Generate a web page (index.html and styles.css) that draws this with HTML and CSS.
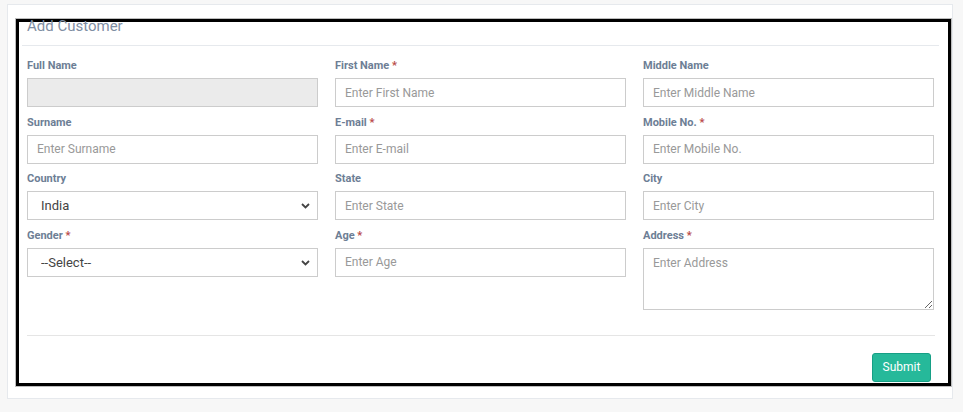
FILE: index.html
```html
<!DOCTYPE html>
<html lang="en">
<head>
    <meta charset="UTF-8">
    <meta name="viewport" content="width=device-width, initial-scale=1.0">
    <title>Add Customer</title>
    <link rel="stylesheet" href="styles.css">
</head>
<body>

    <div class="panel">
        <div class="box">
            <div class="x-title">Add Customer</div>

            <form class="form-grid">
                <div class="field">
                    <label>Full Name</label>
                    <input type="text" class="form-control" disabled>
                </div>
                <div class="field">
                    <label>First Name <span class="req">*</span></label>
                    <input type="text" class="form-control" placeholder="Enter First Name">
                </div>
                <div class="field">
                    <label>Middle Name</label>
                    <input type="text" class="form-control" placeholder="Enter Middle Name">
                </div>

                <div class="field">
                    <label>Surname</label>
                    <input type="text" class="form-control" placeholder="Enter Surname">
                </div>
                <div class="field">
                    <label>E-mail <span class="req">*</span></label>
                    <input type="text" class="form-control" placeholder="Enter E-mail">
                </div>
                <div class="field">
                    <label>Mobile No. <span class="req">*</span></label>
                    <input type="text" class="form-control" placeholder="Enter Mobile No.">
                </div>

                <div class="field">
                    <label>Country</label>
                    <div class="select-wrap">
                        <select class="form-control">
                            <option>India</option>
                        </select>
                        <svg class="chevron" width="9" height="6" viewBox="0 0 9 6"><path d="M1 1l3.5 3.5L8 1" fill="none" stroke="#444" stroke-width="1.8"/></svg>
                    </div>
                </div>
                <div class="field">
                    <label>State</label>
                    <input type="text" class="form-control" placeholder="Enter State">
                </div>
                <div class="field">
                    <label>City</label>
                    <input type="text" class="form-control" placeholder="Enter City">
                </div>

                <div class="field">
                    <label>Gender <span class="req">*</span></label>
                    <div class="select-wrap">
                        <select class="form-control">
                            <option>--Select--</option>
                        </select>
                        <svg class="chevron" width="9" height="6" viewBox="0 0 9 6"><path d="M1 1l3.5 3.5L8 1" fill="none" stroke="#444" stroke-width="1.8"/></svg>
                    </div>
                </div>
                <div class="field">
                    <label>Age <span class="req">*</span></label>
                    <input type="text" class="form-control" placeholder="Enter Age">
                </div>
                <div class="field">
                    <label>Address <span class="req">*</span></label>
                    <textarea class="form-control address" placeholder="Enter Address"></textarea>
                </div>
            </form>

            <div class="form-footer">
                <button type="button" class="btn-success">Submit</button>
            </div>
        </div>
    </div>

</body>
</html>
```

FILE: styles.css
```css
body{
    margin: 0;
    background-color: #f7f7f7;
    font-family: Roboto, "Liberation Sans", Arial, sans-serif;
    color: #73879c;
}

.panel{
    margin: 4px 10px 13px 7px;
    background-color: #fff;
    border: 1px solid #e6e9ed;
    padding: 14px 1px 12px 8px;
}

.box{
    border: 3px solid #000;
    box-shadow: 0 0 0 1px #bdbdbd;
    padding-bottom: 1px;
}

.x-title{
    margin: -5px 9px 0 3px;
    padding: 0 0 10px 5px;
    font-size: 15px;
    line-height: 18px;
    color: #7f8ea3;
    border-bottom: 1px solid #e6e9ed;
}

.form-grid{
    display: grid;
    grid-template-columns: repeat(3, 291px);
    column-gap: 17px;
    row-gap: 8.6px;
    padding: 13px 13px 0 8px;
    margin: 0;
}

.field{
    display: flex;
    flex-direction: column;
}

label{
    font-size: 11px;
    font-weight: bold;
    line-height: 13px;
    margin-bottom: 6px;
    color: #6d7e95;
}

.req{
    color: #b94a48;
}

.form-control{
    box-sizing: border-box;
    width: 100%;
    height: 29px;
    border: 1px solid #ccc;
    border-radius: 0;
    padding: 0 9px;
    font-family: Roboto, "Liberation Sans", Arial, sans-serif;
    font-size: 12px;
    color: #333;
    background-color: #fff;
    outline: none;
}

.form-control::placeholder{
    color: #999;
}

.form-control:disabled{
    background-color: #ebebeb;
}

.select-wrap{
    position: relative;
}

select.form-control{
    appearance: none;
    -webkit-appearance: none;
    padding-left: 13px;
    font-size: 13px;
    color: #444;
}

.chevron{
    position: absolute;
    right: 8px;
    top: 12px;
    pointer-events: none;
}

.address{
    height: 62px;
    padding: 6px 9px;
    resize: vertical;
    line-height: 16px;
}

.form-footer{
    margin: 25px 13px 0 8px;
    border-top: 1px solid #e5e5e5;
    padding: 17px 4px 0 0;
    display: flex;
    justify-content: flex-end;
}

.btn-success{
    width: 59px;
    height: 29px;
    padding: 0;
    background-color: #26b99a;
    border: 1px solid #169f85;
    border-radius: 3px;
    color: #fff;
    font-family: Roboto, "Liberation Sans", Arial, sans-serif;
    font-size: 12px;
}
```
